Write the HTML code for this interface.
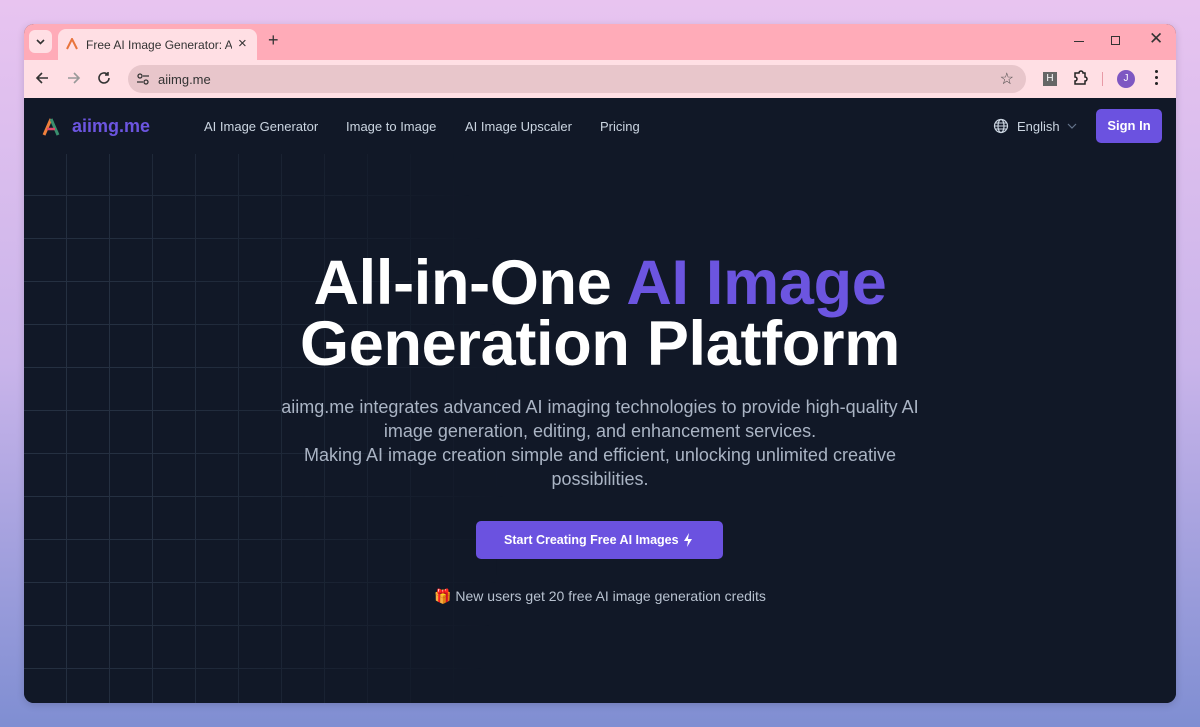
<!DOCTYPE html>
<html><head><meta charset="utf-8"><style>
*{margin:0;padding:0;box-sizing:border-box}
body{width:1200px;height:727px;overflow:hidden;background:linear-gradient(180deg,#e8c4f0 0%,#c9b4ea 50%,#7f8ed2 100%);font-family:"Liberation Sans",sans-serif;position:relative}
.win{position:absolute;left:24px;top:24px;width:1152px;height:679px;border-radius:10px;overflow:hidden;background:#111827;box-shadow:0 2px 8px rgba(0,0,0,.15)}
.tabbar{position:absolute;left:0;top:0;width:100%;height:36px;background:#ffabb8}
.tb{position:absolute;left:0;top:36px;width:100%;height:38px;background:#ffdfe4}
.tab{position:absolute;left:34px;top:5px;width:199px;height:31px;background:#ffdfe4;border-radius:8px 8px 0 0;font-size:12px;color:#333;padding:9px 0 0 28px}
.tab .t{display:block;width:146px;overflow:hidden;white-space:nowrap}
.dd{position:absolute;left:5px;top:6px;width:23px;height:23px;border-radius:6px;background:#ffdfe4}
.url{position:absolute;left:104px;top:5px;width:898px;height:28px;border-radius:14px;background:#e8c6cb;font-size:13px;color:#333;padding:7px 0 0 30px}
.content{position:absolute;left:0;top:74px;width:100%;height:605px;background:#111827;overflow:hidden}
.grid{position:absolute;left:0;top:56px;width:100%;height:549px;
background-image:linear-gradient(#253041 1px,transparent 1px),linear-gradient(90deg,#253041 1px,transparent 1px);background-size:43px 43px;background-position:-1px 41px,-1px 0;
-webkit-mask-image:radial-gradient(ellipse 480px 700px at 0% 55%,#000 30%,transparent 100%);mask-image:radial-gradient(ellipse 480px 700px at 0% 55%,#000 30%,transparent 100%)}
.nav{position:absolute;top:0;left:0;width:100%;height:56px}
.nav a{position:absolute;top:21px;font-size:13px;color:#cbd5e1}
.logo{position:absolute;left:48px;top:18px;font-size:18px;font-weight:bold;color:#6c55e0}
.signin{position:absolute;left:1072px;top:11px;width:66px;height:34px;border-radius:5px;background:#6b52e0;color:#fff;font-size:13px;font-weight:bold;text-align:center;line-height:34px}
h1{position:absolute;left:0;width:100%;top:155px;text-align:center;color:#fff;font-size:63px;line-height:61px;font-weight:bold;letter-spacing:-0.3px}
h1 span{color:#6c55e0}
p.d{position:absolute;left:0;width:100%;top:297px;text-align:center;color:#aab4c4;font-size:18px;line-height:24px}
.cta{position:absolute;left:452px;top:423px;width:247px;height:38px;border-radius:5px;background:#6b52e0;color:#fff;font-size:12.5px;font-weight:bold;line-height:38px;padding-left:28px}
.note{position:absolute;left:0;width:100%;top:490px;text-align:center;color:#b8c2d0;font-size:14px}
</style></head><body>
<div class="win">
<div class="tabbar">
 <div class="dd"><svg width="23" height="23"><path d="M8 10l3.5 3.5L15 10" stroke="#333" stroke-width="1.6" fill="none"/></svg></div>
 <div class="tab"><svg style="position:absolute;left:8px;top:9px" width="12" height="12"><path d="M1 11L6 1l5 10" stroke="#e8743c" stroke-width="2" fill="none"/></svg><span class="t">Free AI Image Generator: All-in-</span><span style="position:absolute;left:180px;top:6px;font-size:15px">×</span></div>
 <div style="position:absolute;left:244px;top:6px;font-size:18px;color:#333">+</div>
 <div style="position:absolute;left:1050px;top:17px;width:10px;height:1px;background:#333"></div>
 <div style="position:absolute;left:1087px;top:12px;width:9px;height:9px;border:1.3px solid #333"></div>
 <div style="position:absolute;left:1125px;top:5px;font-size:17px;color:#333">✕</div>
</div>
<div class="tb">
 <svg style="position:absolute;left:10px;top:10px" width="16" height="16"><path d="M14 8H3M8 3L3 8l5 5" stroke="#333" stroke-width="1.6" fill="none"/></svg>
 <svg style="position:absolute;left:42px;top:10px" width="16" height="16"><path d="M2 8h11M8 3l5 5-5 5" stroke="#999" stroke-width="1.6" fill="none"/></svg>
 <svg style="position:absolute;left:72px;top:10px" width="16" height="16"><path d="M13 8a5 5 0 1 1-1.5-3.6M12 2v3h-3" stroke="#333" stroke-width="1.6" fill="none"/></svg>
 <div class="url"><svg style="position:absolute;left:8px;top:7px" width="14" height="14"><circle cx="4" cy="4" r="2" fill="none" stroke="#333" stroke-width="1.3"/><path d="M7 4h6M1 10h6" stroke="#333" stroke-width="1.3"/><circle cx="10" cy="10" r="2" fill="none" stroke="#333" stroke-width="1.3"/></svg>aiimg.me<span style="position:absolute;right:12px;top:4px;font-size:16px;color:#444">☆</span></div>
 <div style="position:absolute;left:1019px;top:12px;width:14px;height:14px;background:#666;color:#fff;font-size:10px;text-align:center;line-height:14px">H</div>
 <svg style="position:absolute;left:1048px;top:10px" width="16" height="16"><path d="M3 3h4a2 2 0 0 1 4 0h2v4a2 2 0 0 1 0 4v3H3v-3a2 2 0 0 0 0-4z" stroke="#222" stroke-width="1.5" fill="none"/></svg>
 <div style="position:absolute;left:1078px;top:12px;width:1px;height:14px;background:#e89aa6"></div>
 <div style="position:absolute;left:1093px;top:10px;width:18px;height:18px;border-radius:50%;background:#7e57c2;color:#fff;font-size:10px;text-align:center;line-height:18px">J</div>
 <div style="position:absolute;left:1131px;top:10px;width:3px;font-size:0"><div style="width:3px;height:3px;border-radius:50%;background:#222;margin-bottom:3px"></div><div style="width:3px;height:3px;border-radius:50%;background:#222;margin-bottom:3px"></div><div style="width:3px;height:3px;border-radius:50%;background:#222"></div></div>
</div>
<div class="content">
 <div class="grid"></div>
 <div class="nav">
  <svg style="position:absolute;left:18px;top:19px" width="18" height="19"><path d="M2 18L9 2" stroke="#f0803c" stroke-width="3"/><path d="M9 2l7 16" stroke="#3a8f6e" stroke-width="3"/><path d="M5 12h8" stroke="#e04a6a" stroke-width="2.5"/></svg>
  <div class="logo">aiimg.me</div>
  <a style="left:180px">AI Image Generator</a>
  <a style="left:322px">Image to Image</a>
  <a style="left:441px">AI Image Upscaler</a>
  <a style="left:576px">Pricing</a>
  <svg style="position:absolute;left:969px;top:20px" width="16" height="16"><circle cx="8" cy="8" r="6.5" fill="none" stroke="#cbd5e1" stroke-width="1.2"/><ellipse cx="8" cy="8" rx="3" ry="6.5" fill="none" stroke="#cbd5e1" stroke-width="1.2"/><path d="M1.5 8h13M2.5 5h11M2.5 11h11" stroke="#cbd5e1" stroke-width="1"/></svg>
  <a style="left:993px">English</a>
  <svg style="position:absolute;left:1043px;top:25px" width="10" height="6"><path d="M1 1l4 4 4-4" stroke="#64748b" stroke-width="1.2" fill="none"/></svg>
  <div class="signin">Sign In</div>
 </div>
 <h1>All-in-One <span>AI Image</span><br>Generation Platform</h1>
 <p class="d">aiimg.me integrates advanced AI imaging technologies to provide high-quality AI<br>image generation, editing, and enhancement services.<br>Making AI image creation simple and efficient, unlocking unlimited creative<br>possibilities.</p>
 <div class="cta">Start Creating Free AI Images<svg style="position:absolute;left:207px;top:12px" width="10" height="14"><path d="M6 0L1 8h4l-1 6 5-8H5z" fill="#fff"/></svg></div>
 <div class="note">🎁 New users get 20 free AI image generation credits</div>
</div>
</div>
</body></html>
